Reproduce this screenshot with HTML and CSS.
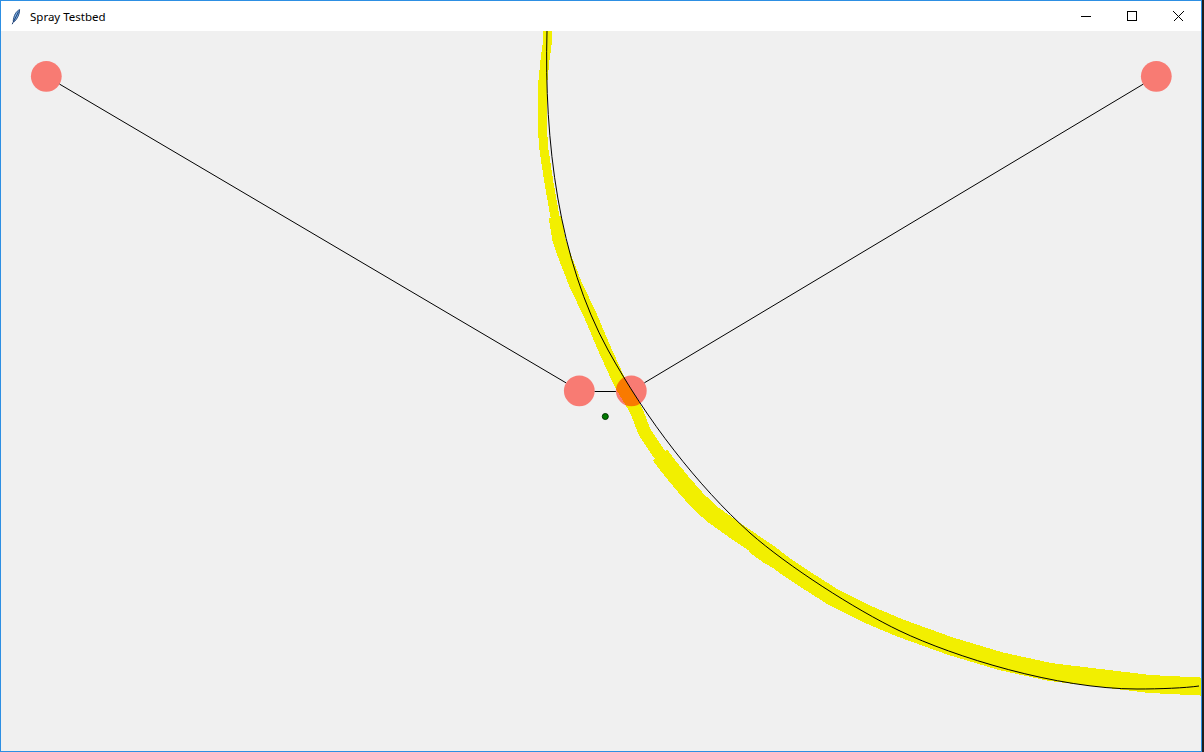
FILE: index.html
```html
<!DOCTYPE html>
<html>
<head>
<meta charset="utf-8">
<title>Spray Testbed</title>
<link rel="stylesheet" href="styles.css">
</head>
<body>
<div class="window">
  <div class="titlebar">
    <svg class="app-icon" width="10" height="16" viewBox="0 0 10 16">
      <path d="M8.6 0.6 C5.2 2.2 2.6 6.4 2.2 12.4 L3.4 12.6 C6.4 9.6 8.8 5 8.6 0.6 Z" fill="#7fb2e6" stroke="#1d3f74" stroke-width="0.9"/>
      <path d="M7.6 2.6 L1.2 15.2" stroke="#1d3f74" stroke-width="1"/>
    </svg>
    <span class="title">Spray Testbed</span>
    <div class="controls">
      <div class="ctl">
        <svg width="10" height="10" viewBox="0 0 10 10"><path d="M0 5.5 H10" stroke="#000" stroke-width="1"/></svg>
      </div>
      <div class="ctl">
        <svg width="10" height="10" viewBox="0 0 10 10"><rect x="0.5" y="0.5" width="9" height="9" fill="none" stroke="#000" stroke-width="1"/></svg>
      </div>
      <div class="ctl">
        <svg width="11" height="11" viewBox="0 0 11 11"><path d="M0.5 0.5 L10.5 10.5 M10.5 0.5 L0.5 10.5" stroke="#000" stroke-width="1"/></svg>
      </div>
    </div>
  </div>
  <div class="canvas">
    <svg class="scene" width="1200" height="720" viewBox="1 31 1200 720">
      <g class="spray" fill="none" stroke="#f2ef00" stroke-linejoin="round">
        <polyline stroke-width="9" points="548,26 547,45 545,60 543,80 542,100 542,125 544,150 549,183 555,217 559,240"/>
        <polyline stroke-width="13" points="555,217 559,240 563,252 575,283 591,317 605,350 620,383 636,410 645,433 660,455 669,467"/>
        <polyline stroke-width="18" points="660,455 669,467 683,484 697,500 712,514 733,529 752,542 767,552 784,565 800,576 833,597 867,614 900,628 950,646 1000,661 1050,672 1100,678 1150,684 1190,686 1210,687"/>
        <polyline stroke-width="10" points="752,548 767,559 780,566"/>
      </g>
      <g class="nodes">
        <circle class="node" cx="46.3" cy="76.3" r="15.4"/>
        <circle class="node" cx="1156.3" cy="76.3" r="15.4"/>
        <circle class="node" cx="579.3" cy="390.8" r="15.4"/>
        <circle class="node" cx="631.3" cy="390.8" r="15.4"/>
      </g>
      <path class="curve" d="M547,31 C544,141 558.5,260 608,350 C646.5,420 698,486 750,533 C787.5,566 855,609.5 900,631 C954,656.8 1057,689 1137,689 C1160,689 1185,688 1199,686"/>
      <g class="links">
        <line x1="59.5" y1="84.1" x2="566.1" y2="382.9"/>
        <line x1="594.7" y1="391.5" x2="615.9" y2="391.5"/>
        <line x1="644.4" y1="382.8" x2="1143.2" y2="84.2"/>
      </g>
      <circle class="dot" cx="605.3" cy="416.5" r="3"/>
    </svg>
  </div>
</div>
</body>
</html>
```

FILE: styles.css
```css
html, body {
  margin: 0;
  padding: 0;
}

body {
  background: #1e1e1e;
  width: 1204px;
  height: 752px;
  overflow: hidden;
}

.window {
  width: 1202px;
  height: 752px;
  box-sizing: border-box;
  border: 1px solid #2d8fe3;
  display: flex;
  flex-direction: column;
  background: #ffffff;
}

.titlebar {
  height: 30px;
  flex: 0 0 30px;
  display: flex;
  align-items: center;
  background: #ffffff;
}

.app-icon {
  margin-left: 10px;
  margin-top: 1px;
  display: block;
}

.title {
  margin-left: 9px;
  font-family: "Noto Sans", "Open Sans", "Liberation Sans", sans-serif;
  font-size: 11.5px;
  color: #000000;
  line-height: 16px;
  margin-top: 1px;
}

.controls {
  margin-left: auto;
  display: flex;
  height: 30px;
}

.ctl {
  width: 46px;
  height: 30px;
  display: flex;
  align-items: center;
  justify-content: center;
}

.ctl svg {
  display: block;
  shape-rendering: crispEdges;
}

.canvas {
  flex: 1;
  background: #f0f0f0;
  overflow: hidden;
}

.scene {
  display: block;
}

.spray polyline {
  shape-rendering: crispEdges;
}

.node {
  fill: rgba(255, 16, 0, 0.52);
}

.curve {
  fill: none;
  stroke: #000000;
  stroke-width: 1;
}

.links line {
  stroke: #000000;
  stroke-width: 1;
}

.dot {
  fill: #007a00;
  stroke: #003300;
  stroke-width: 1;
}
```
